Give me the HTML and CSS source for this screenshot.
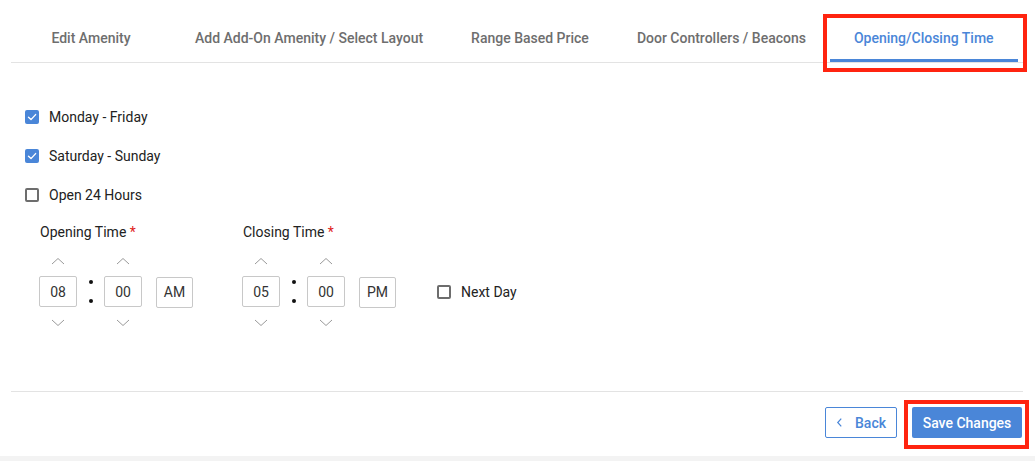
FILE: index.html
```html
<!DOCTYPE html>
<html lang="en">
<head>
    <meta charset="UTF-8">
    <meta name="viewport" content="width=device-width, initial-scale=1.0">
    <title>Opening/Closing Time</title>
    <link rel="stylesheet" href="styles.css">
</head>
<body>
    <div class="page">
        <div class="tabs">
            <div class="tab tab-first">Edit Amenity</div>
            <div class="tab">Add Add-On Amenity / Select Layout</div>
            <div class="tab">Range Based Price</div>
            <div class="tab">Door Controllers / Beacons</div>
            <div class="tab active">Opening/Closing Time</div>
            <div class="highlight highlight-tab"></div>
        </div>

        <div class="content">
            <label class="check-row">
                <span class="check checked">
                    <svg viewBox="0 0 14 14" width="14" height="14"><path d="M3.5 7.2 L6 9.6 L10.6 4.6" fill="none" stroke="#fff" stroke-width="1.4" stroke-linecap="round" stroke-linejoin="round"/></svg>
                </span>
                Monday - Friday
            </label>
            <label class="check-row">
                <span class="check checked">
                    <svg viewBox="0 0 14 14" width="14" height="14"><path d="M3.5 7.2 L6 9.6 L10.6 4.6" fill="none" stroke="#fff" stroke-width="1.4" stroke-linecap="round" stroke-linejoin="round"/></svg>
                </span>
                Saturday - Sunday
            </label>
            <label class="check-row">
                <span class="check"></span>
                Open 24 Hours
            </label>

            <div class="times">
                <div class="time-group">
                    <div class="time-label">Opening Time <span class="req">*</span></div>
                    <div class="time-row">
                        <div class="spinner">
                            <button class="arrow"><svg viewBox="0 0 14 8" width="14" height="8"><path d="M1 7 L7 1.5 L13 7" fill="none" stroke="#9a9a9a" stroke-width="1"/></svg></button>
                            <div class="time-box">08</div>
                            <button class="arrow"><svg viewBox="0 0 14 8" width="14" height="8"><path d="M1 1 L7 6.5 L13 1" fill="none" stroke="#9a9a9a" stroke-width="1"/></svg></button>
                        </div>
                        <div class="colon"><span></span><span></span></div>
                        <div class="spinner">
                            <button class="arrow"><svg viewBox="0 0 14 8" width="14" height="8"><path d="M1 7 L7 1.5 L13 7" fill="none" stroke="#9a9a9a" stroke-width="1"/></svg></button>
                            <div class="time-box">00</div>
                            <button class="arrow"><svg viewBox="0 0 14 8" width="14" height="8"><path d="M1 1 L7 6.5 L13 1" fill="none" stroke="#9a9a9a" stroke-width="1"/></svg></button>
                        </div>
                        <div class="time-box meridian">AM</div>
                    </div>
                </div>

                <div class="time-group">
                    <div class="time-label">Closing Time <span class="req">*</span></div>
                    <div class="time-row">
                        <div class="spinner">
                            <button class="arrow"><svg viewBox="0 0 14 8" width="14" height="8"><path d="M1 7 L7 1.5 L13 7" fill="none" stroke="#9a9a9a" stroke-width="1"/></svg></button>
                            <div class="time-box">05</div>
                            <button class="arrow"><svg viewBox="0 0 14 8" width="14" height="8"><path d="M1 1 L7 6.5 L13 1" fill="none" stroke="#9a9a9a" stroke-width="1"/></svg></button>
                        </div>
                        <div class="colon"><span></span><span></span></div>
                        <div class="spinner">
                            <button class="arrow"><svg viewBox="0 0 14 8" width="14" height="8"><path d="M1 7 L7 1.5 L13 7" fill="none" stroke="#9a9a9a" stroke-width="1"/></svg></button>
                            <div class="time-box">00</div>
                            <button class="arrow"><svg viewBox="0 0 14 8" width="14" height="8"><path d="M1 1 L7 6.5 L13 1" fill="none" stroke="#9a9a9a" stroke-width="1"/></svg></button>
                        </div>
                        <div class="time-box meridian">PM</div>
                        <label class="check-row next-day">
                            <span class="check"></span>
                            Next Day
                        </label>
                    </div>
                </div>
            </div>
        </div>

        <div class="footer">
            <button class="btn btn-back">
                <svg viewBox="0 0 8 12" width="7" height="11"><path d="M6 1.5 L2 6 L6 10.5" fill="none" stroke="#4a86d8" stroke-width="1.4"/></svg>
                Back
            </button>
            <button class="btn btn-save">Save Changes</button>
            <div class="highlight highlight-save"></div>
        </div>
        <div class="bottom-strip"></div>
    </div>
</body>
</html>
```

FILE: styles.css
```css
/* Global Styles */
body {
    margin: 0;
    padding: 0;
    background: #fff;
    font-family: Roboto, 'Liberation Sans', sans-serif;
    color: #222;
    overflow: hidden;
}

.page {
    display: flex;
    flex-direction: column;
    height: 461px;
}

/* Tabs */
.tabs {
    position: relative;
    display: flex;
    margin: 0 11px;
    border-bottom: 1px solid #e3e3e3;
}

.tab {
    height: 62px;
    box-sizing: border-box;
    padding: 30px 24px 0;
    font-size: 14px;
    line-height: 16px;
    font-weight: 500;
    color: #6e6e6e;
    white-space: nowrap;
    border-bottom: 3px solid transparent;
}

.tab-first {
    width: 160px;
    padding: 30px 0 0;
    text-align: center;
}

.tab.active {
    color: #4a86d8;
    border-bottom-color: #4a86d8;
}

/* Red outline boxes */
.highlight {
    position: absolute;
    border: 4px solid #ff2410;
    box-sizing: border-box;
    pointer-events: none;
}

.highlight-tab {
    left: 812px;
    top: 14px;
    width: 204px;
    height: 58px;
}

.highlight-save {
    left: 893px;
    top: 8px;
    width: 125px;
    height: 49px;
}

/* Content */
.content {
    flex: 1;
    padding: 44px 0 0 25px;
}

.check-row {
    display: flex;
    align-items: center;
    height: 20px;
    margin-bottom: 19px;
    font-size: 14px;
    color: #222;
}

.check {
    width: 14px;
    height: 14px;
    box-sizing: border-box;
    border: 2px solid #6d6d6d;
    border-radius: 2px;
    margin-right: 10px;
    display: flex;
    align-items: center;
    justify-content: center;
}

.check.checked {
    background: #4a86d8;
    border: none;
}

.times {
    display: flex;
    gap: 49px;
    padding-left: 14px;
}

.time-label {
    font-size: 14px;
    line-height: 16px;
    color: #222;
    margin-left: 1px;
    margin-bottom: 13px;
}

.req {
    color: #e0201b;
}

.time-row {
    display: flex;
    align-items: center;
}

.spinner {
    display: flex;
    flex-direction: column;
    align-items: center;
}

.arrow {
    width: 38px;
    height: 16px;
    padding: 0;
    border: none;
    background: none;
    display: flex;
    align-items: center;
    justify-content: center;
}

.spinner .time-box {
    margin: 7px 0 8px;
}

.time-box {
    width: 38px;
    height: 31px;
    box-sizing: border-box;
    border: 1px solid #c8c8c8;
    border-radius: 2px;
    display: flex;
    align-items: center;
    justify-content: center;
    font-size: 14px;
    color: #333;
}

.meridian {
    width: 37px;
    margin-left: 14px;
}

.colon {
    width: 27px;
    height: 23px;
    display: flex;
    flex-direction: column;
    justify-content: space-between;
    align-items: center;
    margin-top: -1px;
}

.colon span {
    width: 4px;
    height: 4px;
    border-radius: 50%;
    background: #111;
}

.next-day {
    margin: 0 0 0 41px;
}

/* Footer */
.footer {
    position: relative;
    display: flex;
    justify-content: flex-end;
    gap: 15px;
    margin: 0 12px 0 11px;
    padding: 15px 1px 18px 0;
    border-top: 1px solid #e3e3e3;
}

.btn {
    height: 31px;
    box-sizing: border-box;
    border-radius: 2px;
    font-family: Roboto, 'Liberation Sans', sans-serif;
    font-size: 14px;
    font-weight: 500;
    display: flex;
    align-items: center;
    justify-content: center;
    cursor: pointer;
}

.btn-back {
    width: 72px;
    background: #fff;
    border: 1px solid #4a86d8;
    color: #4a86d8;
    gap: 12px;
}

.btn-save {
    width: 110px;
    background: #4a86d8;
    border: none;
    color: #fff;
}

.bottom-strip {
    height: 5px;
    background: #f3f3f3;
}
```
